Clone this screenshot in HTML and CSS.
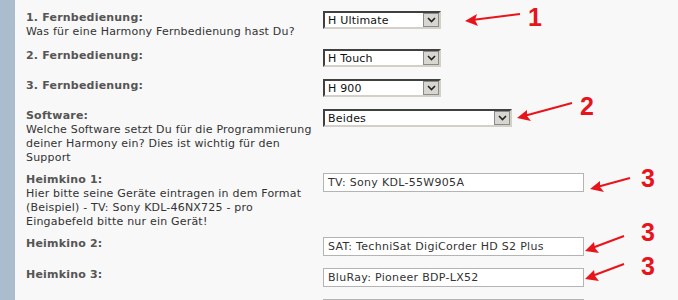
FILE: index.html
```html
<!DOCTYPE html>
<html lang="de">
<head>
    <meta charset="UTF-8">
    <title>Harmony Profil</title>
    <link rel="stylesheet" href="styles.css">
</head>
<body>
    <div class="side"></div>
    <div class="form">
        <div class="row first">
            <div class="label"><b>1. Fernbedienung:</b><br>Was für eine Harmony Fernbedienung hast Du?</div>
            <div class="field"><div class="select"><span>H Ultimate</span><i class="btn"><svg width="9" height="6" viewBox="0 0 9 6"><path d="M1 1 L4.5 4.5 L8 1" fill="none" stroke="#222" stroke-width="1.6"/></svg></i></div></div>
        </div>
        <div class="row">
            <div class="label"><b>2. Fernbedienung:</b></div>
            <div class="field"><div class="select"><span>H Touch</span><i class="btn"><svg width="9" height="6" viewBox="0 0 9 6"><path d="M1 1 L4.5 4.5 L8 1" fill="none" stroke="#222" stroke-width="1.6"/></svg></i></div></div>
        </div>
        <div class="row">
            <div class="label"><b>3. Fernbedienung:</b></div>
            <div class="field"><div class="select"><span>H 900</span><i class="btn"><svg width="9" height="6" viewBox="0 0 9 6"><path d="M1 1 L4.5 4.5 L8 1" fill="none" stroke="#222" stroke-width="1.6"/></svg></i></div></div>
        </div>
        <div class="row">
            <div class="label"><b>Software:</b><br>Welche Software setzt Du für die Programmierung deiner Harmony ein? Dies ist wichtig für den Support</div>
            <div class="field"><div class="select wide"><span>Beides</span><i class="btn"><svg width="9" height="6" viewBox="0 0 9 6"><path d="M1 1 L4.5 4.5 L8 1" fill="none" stroke="#222" stroke-width="1.6"/></svg></i></div></div>
        </div>
        <div class="row">
            <div class="label"><b>Heimkino 1:</b><br>Hier bitte seine Geräte eintragen in dem Format (Beispiel) - TV: Sony KDL-46NX725 - pro Eingabefeld bitte nur ein Gerät!</div>
            <div class="field"><div class="text">TV: Sony KDL-55W905A</div></div>
        </div>
        <div class="row">
            <div class="label"><b>Heimkino 2:</b></div>
            <div class="field"><div class="text">SAT: TechniSat DigiCorder HD S2 Plus</div></div>
        </div>
        <div class="row">
            <div class="label"><b>Heimkino 3:</b></div>
            <div class="field"><div class="text">BluRay: Pioneer BDP-LX52</div></div>
        </div>
        <div class="row">
            <div class="label"><b>Heimkino 4:</b></div>
            <div class="field"><div class="text"></div></div>
        </div>
    </div>

    <!-- red annotations drawn over the form -->
    <svg class="notes" width="678" height="300" viewBox="0 0 678 300">
        <g stroke="#e8141b" stroke-width="2" fill="#e8141b">
            <line x1="520" y1="14" x2="472" y2="20"/>
            <path d="M465 21 L477 14 L475 20 L478 26 Z" stroke="none"/>
            <line x1="572" y1="103" x2="524" y2="116"/>
            <path d="M517 118 L527 110 L527 116 L531 121 Z" stroke="none"/>
            <line x1="630" y1="178" x2="597" y2="187"/>
            <path d="M590 189 L600 181 L600 187 L604 192 Z" stroke="none"/>
            <line x1="624" y1="236" x2="592" y2="248"/>
            <path d="M585 251 L594 242 L595 248 L599 253 Z" stroke="none"/>
            <line x1="624" y1="264" x2="592" y2="276"/>
            <path d="M585 279 L594 270 L595 276 L599 281 Z" stroke="none"/>
        </g>
        <g class="num">
            <text x="528" y="26">1</text>
            <text x="580" y="115">2</text>
            <text x="641" y="187">3</text>
            <text x="641" y="241">3</text>
            <text x="641" y="275">3</text>
        </g>
    </svg>
</body>
</html>
```

FILE: styles.css
```css
body {
    margin: 0;
    background-color: #f8f8f8;
    font-family: "DejaVu Sans", Verdana, sans-serif;
    font-size: 11px;
    letter-spacing: 0.2px;
    color: #333;
    display: flex;
    min-height: 100vh;
    overflow: hidden;
}

.side {
    width: 15px;
    flex-shrink: 0;
    background-color: #abbccc;
}

.form {
    padding: 7px 0 0 11px;
    flex: 1;
}

.row {
    display: grid;
    grid-template-columns: 297px 1fr;
    padding: 4px 0;
}

.row.first {
    padding-bottom: 6px;
}

.label {
    line-height: 14px;
    padding-right: 6px;
}

.label b {
    color: #555;
}

.field {
    padding-bottom: 4px;
}

/* old style drop down */
.select {
    width: 118px;
    height: 18px;
    box-sizing: border-box;
    background-color: #fff;
    border-top: 2px solid #404040;
    border-left: 2px solid #404040;
    border-bottom: 2px solid #d4d0c8;
    border-right: 2px solid #d4d0c8;
    display: flex;
    align-items: center;
    justify-content: space-between;
    color: #111;
}

.select.wide {
    width: 189px;
}

.select span {
    padding-left: 3px;
}

.select .btn {
    width: 16px;
    height: 14px;
    box-sizing: border-box;
    background-color: #d8d6d0;
    border: 1px solid #8a8a8a;
    display: flex;
    align-items: center;
    justify-content: center;
}

.text {
    width: 261px;
    height: 19px;
    box-sizing: border-box;
    background-color: #fff;
    border: 1px solid #b4b4b4;
    padding: 0 4px;
    line-height: 17px;
    letter-spacing: 0.3px;
    color: #333;
    white-space: nowrap;
}

.notes {
    position: absolute;
    left: 0;
    top: 0;
    pointer-events: none;
}

.num text {
    font-family: "Liberation Sans", Arial, sans-serif;
    font-weight: bold;
    font-size: 25px;
    letter-spacing: 0;
    fill: #e8141b;
}
```
